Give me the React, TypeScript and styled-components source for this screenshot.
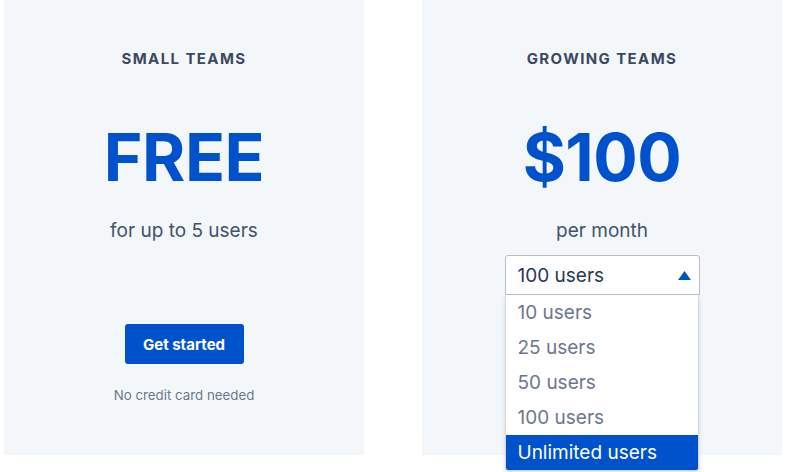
import React from "react";
import styled, { createGlobalStyle } from "styled-components";

const Global = createGlobalStyle`
  html, body { margin: 0; padding: 0; background: #ffffff; }
  body { font-family: Inter, "Noto Sans", "Liberation Sans", sans-serif; -webkit-font-smoothing: antialiased; }
`;

const Page = styled.div`
  display: flex;
  gap: 58px;
  padding-left: 4px;
  width: 785px;
  height: 472px;
  box-sizing: border-box;
  overflow: hidden;
`;

const Card = styled.div`
  width: 360px;
  height: 455px;
  background: #f4f7f9;
  display: flex;
  flex-direction: column;
  align-items: center;
  padding-top: 49px;
  box-sizing: border-box;
  position: relative;
`;

const Title = styled.div`
  font-size: 15px;
  line-height: 20px;
  font-weight: 700;
  letter-spacing: 1.4px;
  color: #3b4862;
`;

const Price = styled.div`
  margin-top: 48px;
  font-size: 66px;
  line-height: 80px;
  font-weight: 700;
  color: #0052cc;
  letter-spacing: -0.5px;
`;

const Sub = styled.div`
  margin-top: 22px;
  font-size: 19px;
  line-height: 24px;
  color: #42526e;
`;

const ControlSlot = styled.div`
  margin-top: 12px;
  height: 40px;
  width: 195px;
  position: relative;
`;

const SelectBox = styled.div`
  height: 40px;
  box-sizing: border-box;
  border: 1px solid #b9bec7;
  border-radius: 3px 3px 0 0;
  background: #ffffff;
  display: flex;
  align-items: center;
  justify-content: space-between;
  padding: 0 8px 0 12px;
  font-size: 19px;
  color: #253858;
`;

const List = styled.ul`
  position: absolute;
  top: 40px;
  left: 0;
  width: 194px;
  margin: 0;
  padding: 0;
  list-style: none;
  background: #ffffff;
  border: 1px solid #d4d8de;
  border-top: none;
  border-radius: 0 0 3px 3px;
  box-shadow: 0 2px 4px rgba(9, 30, 66, 0.15);
  box-sizing: border-box;
  overflow: hidden;
  z-index: 2;
`;

const Option = styled.li<{ $active?: boolean }>`
  height: 35px;
  display: flex;
  align-items: center;
  padding-left: 12px;
  font-size: 19px;
  color: ${(p) => (p.$active ? "#ffffff" : "#6b778c")};
  background: ${(p) => (p.$active ? "#0052cc" : "#ffffff")};
`;

const Button = styled.button`
  margin-top: 29px;
  width: 119px;
  height: 40px;
  border: none;
  border-radius: 3px;
  background: #0052cc;
  color: #ffffff;
  font-family: inherit;
  font-size: 15px;
  font-weight: 700;
  cursor: pointer;
`;

const Note = styled.div`
  margin-top: 23px;
  font-size: 13.3px;
  line-height: 16px;
  color: #6b778c;
`;

const Caret = () => (
  <svg width="13" height="9" viewBox="0 0 13 9">
    <path d="M6.5 0 L13 9 L0 9 Z" fill="#0052cc" />
  </svg>
);

const options = ["10 users", "25 users", "50 users", "100 users", "Unlimited users"];

export default function App() {
  return (
    <>
      <Global />
      <Page>
        <Card>
          <Title>SMALL TEAMS</Title>
          <Price>FREE</Price>
          <Sub>for up to 5 users</Sub>
          <ControlSlot />
          <Button>Get started</Button>
          <Note>No credit card needed</Note>
        </Card>
        <Card>
          <Title>GROWING TEAMS</Title>
          <Price>$100</Price>
          <Sub>per month</Sub>
          <ControlSlot>
            <SelectBox>
              <span>100 users</span>
              <Caret />
            </SelectBox>
            <List>
              {options.map((o) => (
                <Option key={o} $active={o === "Unlimited users"}>
                  {o}
                </Option>
              ))}
            </List>
          </ControlSlot>
        </Card>
      </Page>
    </>
  );
}
